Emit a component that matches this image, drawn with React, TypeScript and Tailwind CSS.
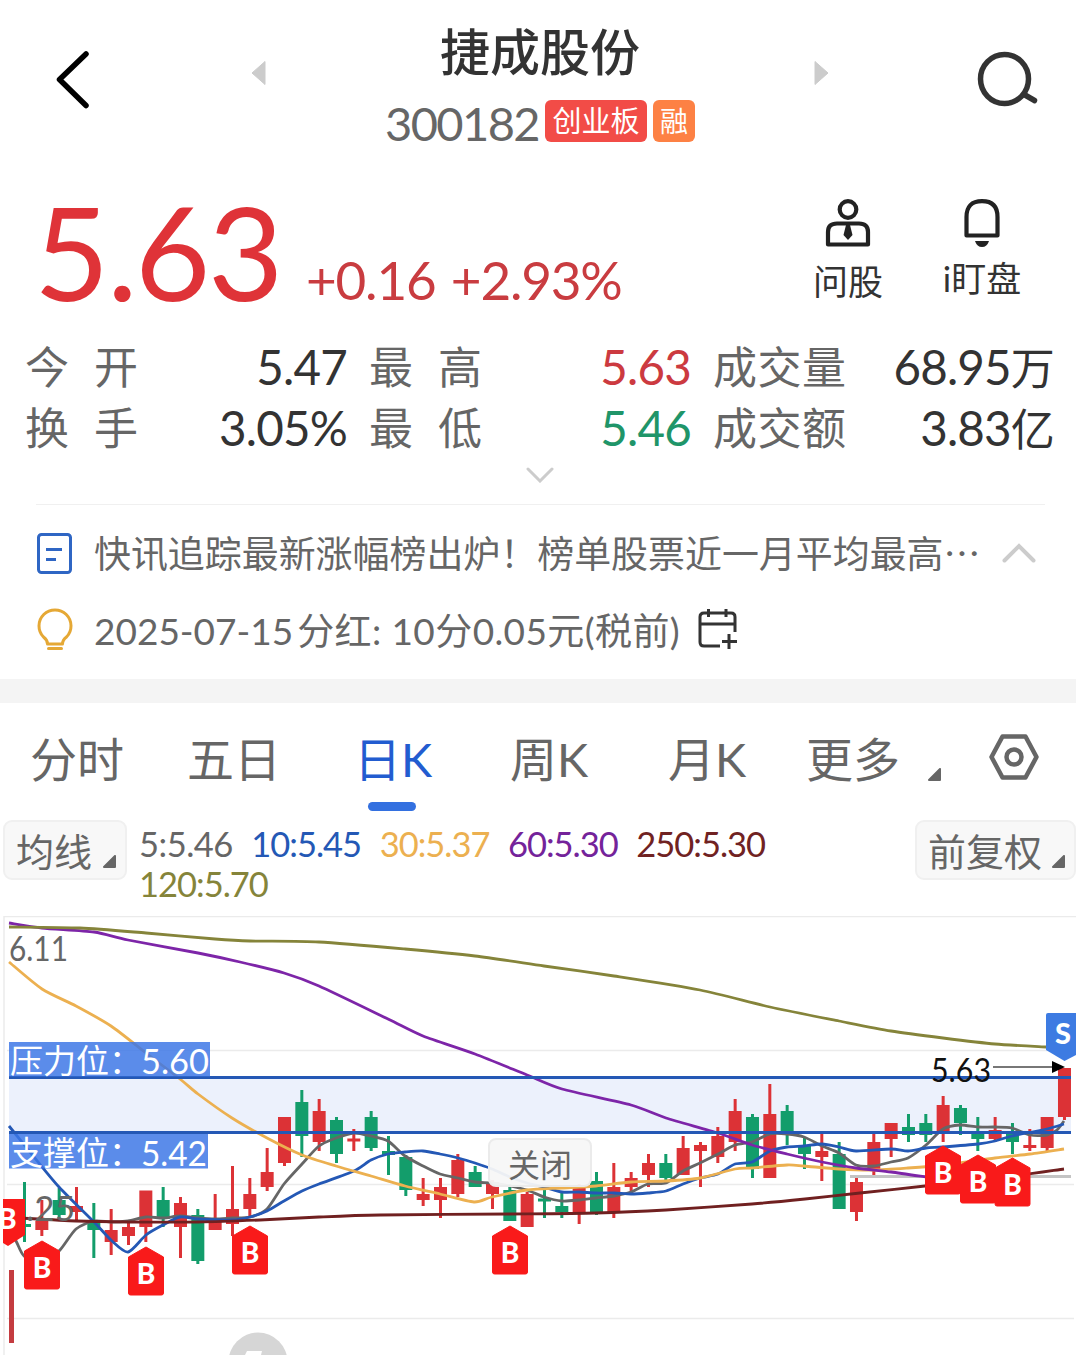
import { clsx } from 'clsx';

type Point = [number, number];
// direction, high, low, body top, body bottom
type Candle = ['u' | 'd', number, number, number, number];

const candles: Candle[] = [
  ['d', 1182, 1242, 1224, 1227], ['u', 1200, 1236, 1221, 1230], ['d', 1188, 1221, 1200, 1215],
  ['u', 1187, 1220, 1206, 1212], ['d', 1203, 1258, 1220, 1230], ['u', 1209, 1255, 1230, 1242],
  ['u', 1222, 1245, 1227, 1236], ['u', 1191, 1242, 1190.5, 1227], ['d', 1187, 1227, 1200, 1219],
  ['u', 1197, 1258, 1203, 1227], ['d', 1209, 1264, 1215, 1261], ['u', 1194, 1230, 1221, 1230],
  ['u', 1166, 1236, 1209, 1224], ['u', 1178, 1218, 1194, 1209], ['u', 1148, 1191, 1172, 1187],
  ['u', 1117, 1166, 1117, 1163], ['d', 1090, 1157, 1102, 1136], ['u', 1099, 1151, 1111, 1142],
  ['d', 1117, 1163, 1120, 1154], ['u', 1129, 1151, 1138.5, 1141.5], ['d', 1111, 1151, 1117, 1148],
  ['d', 1136, 1175, 1151, 1155], ['d', 1155, 1196, 1157, 1190], ['u', 1178, 1206, 1194, 1200],
  ['u', 1178, 1218, 1187, 1200], ['u', 1154, 1197, 1160, 1194], ['d', 1166, 1187, 1172, 1187],
  ['u', 1180, 1209, 1182, 1194], ['d', 1184, 1221, 1190, 1221], ['u', 1192, 1227, 1194, 1227],
  ['d', 1190, 1218, 1198.5, 1201.5], ['d', 1192, 1218, 1206, 1212], ['u', 1184, 1224, 1185, 1213],
  ['d', 1172, 1215, 1181, 1212], ['u', 1163, 1218, 1187, 1212], ['u', 1172, 1191, 1178, 1187],
  ['u', 1154, 1187, 1163, 1175], ['d', 1154, 1180, 1163, 1178], ['u', 1136, 1175, 1148, 1175],
  ['u', 1142, 1187, 1145, 1151], ['u', 1127, 1163, 1136, 1157], ['u', 1099, 1151, 1111, 1142],
  ['d', 1114, 1178, 1117, 1169], ['u', 1084, 1178, 1114, 1178], ['d', 1105, 1145, 1111, 1134],
  ['d', 1137, 1169, 1145, 1154], ['u', 1133, 1181, 1151, 1157], ['d', 1142, 1209, 1154, 1209],
  ['u', 1178, 1221, 1182, 1212], ['u', 1133, 1175, 1142, 1169], ['u', 1123, 1157, 1123, 1139],
  ['d', 1114, 1142, 1127, 1135], ['d', 1114, 1142, 1123, 1135], ['u', 1096, 1142, 1105, 1133],
  ['d', 1105, 1135, 1108, 1123], ['d', 1117, 1151, 1133, 1139], ['u', 1117, 1142, 1130, 1139],
  ['d', 1123, 1154, 1133, 1142], ['u', 1129, 1151, 1145, 1148], ['u', 1117, 1152, 1117, 1148],
  ['u', 1068, 1120, 1068, 1117],
];

const ma5: Point[] = [[9, 1226], [17, 1243], [24, 1256], [42, 1266], [60, 1250], [76, 1229], [94, 1221], [111, 1222], [128, 1221], [146, 1217], [163, 1218], [180, 1216], [198, 1218], [215, 1219], [232, 1218], [250, 1217], [267, 1209], [284, 1184], [302, 1164], [319, 1146], [336, 1138], [354, 1133], [371, 1136], [388, 1141], [405, 1156], [423, 1166], [440, 1174], [458, 1178], [475, 1182], [492, 1183], [510, 1186], [527, 1190], [544, 1197], [562, 1201], [579, 1200], [596, 1198], [614, 1196], [631, 1192], [648, 1184], [666, 1183], [683, 1171], [700, 1163], [718, 1154], [735, 1145], [752, 1142], [770, 1134], [787, 1134], [804, 1137], [822, 1146], [839, 1153], [856, 1165], [874, 1166], [891, 1162], [908, 1158], [926, 1145], [943, 1129], [960, 1125], [978, 1127], [995, 1127], [1012, 1128], [1030, 1135], [1047, 1135], [1057, 1130], [1064, 1121]];
const ma10: Point[] = [[9, 1126], [30, 1152], [59, 1187], [94, 1222], [111, 1240], [128, 1252], [146, 1235], [163, 1225], [180, 1217], [198, 1219], [232, 1220], [250, 1217], [267, 1211], [284, 1201], [302, 1191], [319, 1184], [354, 1171], [371, 1160], [388, 1154], [405, 1152], [423, 1151], [440, 1154], [458, 1158], [475, 1163], [492, 1169], [510, 1177], [527, 1183], [544, 1187], [562, 1192], [579, 1192], [596, 1193], [614, 1193], [631, 1194], [648, 1193], [666, 1191], [683, 1184], [700, 1178], [718, 1174], [735, 1164], [752, 1162], [770, 1151], [787, 1147], [804, 1146], [822, 1144], [839, 1147], [856, 1151], [891, 1149], [908, 1151], [926, 1148], [943, 1147], [978, 1144], [995, 1141], [1012, 1136], [1047, 1129], [1064, 1124]];
const ma30: Point[] = [[9, 962], [42, 989], [76, 1006], [111, 1026], [146, 1053], [180, 1079], [198, 1094], [232, 1118], [267, 1138], [302, 1155], [336, 1166], [371, 1176], [405, 1186], [440, 1194], [474, 1202], [492, 1197], [527, 1190], [562, 1188], [596, 1186], [631, 1182], [666, 1181], [700, 1178], [735, 1169], [752, 1168], [787, 1165], [804, 1166], [839, 1169], [874, 1170], [908, 1168], [943, 1165], [995, 1158], [1030, 1154], [1064, 1149]];
const ma60: Point[] = [[9, 923], [42, 928], [94, 932], [128, 940], [198, 953], [240, 962], [284, 973], [319, 986], [388, 1019], [423, 1036], [475, 1054], [527, 1075], [562, 1089], [631, 1105], [666, 1118], [718, 1133], [752, 1145], [787, 1154], [822, 1162], [856, 1168], [891, 1172], [926, 1177]];
const ma120: Point[] = [[9, 927], [80, 928], [146, 933], [215, 939], [250, 941], [319, 942], [405, 949], [475, 956], [544, 966], [614, 976], [700, 990], [770, 1007], [839, 1021], [891, 1031], [943, 1038], [995, 1044], [1047, 1047]];
const ma250: Point[] = [[20, 1218], [76, 1221], [128, 1222], [198, 1222], [260, 1220], [319, 1217], [380, 1215], [510, 1214], [596, 1213], [666, 1210], [752, 1204], [805, 1199], [860, 1193], [925, 1186], [1000, 1178], [1064, 1169]];

const buyMarks: Point[] = [[42, 1241], [146, 1247], [250, 1226], [510, 1226], [943, 1146], [978, 1155], [1012.5, 1158]];

const legend = [
  { text: '5:5.46', color: 'text-[#666666]' },
  { text: '10:5.45', color: 'text-[#2458b5]' },
  { text: '30:5.37', color: 'text-[#ecb050]' },
  { text: '60:5.30', color: 'text-[#74239a]' },
  { text: '250:5.30', color: 'text-[#702222]' },
];

const tabs = [
  { label: '分时', box: 'w-[157px]' },
  { label: '五日', box: 'w-[167px]' },
  { label: '日K', box: 'w-[156px]', active: true },
  { label: '周K', box: 'w-[158px]' },
  { label: '月K', box: 'w-[138px]' },
  { label: '更多', box: 'w-[122px]' },
];

const stats = [
  [
    { label: '今开', value: '5.47', color: 'text-[#333333]' },
    { label: '最高', value: '5.63', color: 'text-[#cc3a40]' },
    { label: '成交量', value: '68.95万', color: 'text-[#333333]' },
  ],
  [
    { label: '换手', value: '3.05%', color: 'text-[#333333]' },
    { label: '最低', value: '5.46', color: 'text-[#1f9569]' },
    { label: '成交额', value: '3.83亿', color: 'text-[#333333]' },
  ],
];

// Catmull-Rom spline with a low tension, so the averages stay close to their samples
function curve(points: Point[]) {
  let d = `M${points[0][0]} ${points[0][1]}`;
  for (let i = 0; i < points.length - 1; i++) {
    const p0 = points[i - 1] ?? points[i];
    const p1 = points[i];
    const p2 = points[i + 1];
    const p3 = points[i + 2] ?? p2;
    d += `C${p1[0] + (p2[0] - p0[0]) / 8} ${p1[1] + (p2[1] - p0[1]) / 8} ${p2[0] - (p3[0] - p1[0]) / 8} ${p2[1] - (p3[1] - p1[1]) / 8} ${p2[0]} ${p2[1]}`;
  }
  return d;
}

function Corner({ className }: { className?: string }) {
  return (
    <svg viewBox="0 0 13 13" className={clsx('w-[13px] h-[13px]', className)}>
      <path d="M12 1 V12 H1 Z" fill="#666" stroke="#666" strokeWidth="2" strokeLinejoin="round" />
    </svg>
  );
}

function BuyMark({ x, y }: { x: number; y: number }) {
  return (
    <g>
      <path d={`M${x} ${y} L${x + 17.5} ${y + 10} V${y + 46} Q${x + 17.5} ${y + 48} ${x + 15.5} ${y + 48} H${x - 15.5} Q${x - 17.5} ${y + 48} ${x - 17.5} ${y + 46} V${y + 10} Z`} fill="#f91a1a" stroke="#f91a1a" strokeLinejoin="round" />
      <text x={x} y={y + 37} textAnchor="middle" fontSize="28" fontWeight="900" fill="#fff">B</text>
    </g>
  );
}

function Header() {
  return (
    <header className="flex h-[165px] items-start pl-[54px]">
      <svg viewBox="0 0 40 62" className="mt-12 h-[62px] w-10" fill="none" stroke="#000" strokeWidth="5.500" strokeLinecap="round" strokeLinejoin="round">
        <path d="M32 6 L5.500 31.500 L32 57.500" />
      </svg>
      <svg viewBox="0 0 15 24" className="ml-[157px] mt-[61px] h-6 w-[15px]"><path d="M14 0.500 V23.500 L1 12 Z" fill="#ccc" stroke="#ccc" strokeLinejoin="round" /></svg>
      <div className="ml-[119px] flex w-[310px] flex-col items-center">
        <h1 className="mt-[22px] h-[60px] text-[50px] font-medium leading-[60px] text-[#333333]">捷成股份</h1>
        <div className="mt-[18px] flex h-[42px] items-center">
          <span className="mt-1 w-[160px] text-[47px] leading-[42px] tracking-[-1.600px] text-[#666666]">300182</span>
          <span className="mr-1.5 h-[42px] w-[102px] shrink-0 rounded-md bg-[#f24c47] text-center text-[29px] leading-[42px] text-white">创业板</span>
          <span className="h-[42px] w-[42px] shrink-0 rounded-md bg-[#fd8144] text-center text-[28px] leading-[42px] text-white">融</span>
        </div>
      </div>
      <svg viewBox="0 0 15 24" className="ml-[119px] mt-[61px] h-6 w-[15px]"><path d="M1 0.500 V23.500 L14 12 Z" fill="#ccc" stroke="#ccc" strokeLinejoin="round" /></svg>
      <svg viewBox="0 0 64 60" className="ml-[147px] mt-[50px] h-[60px] w-16" fill="none" stroke="#333" strokeWidth="5.500" strokeLinecap="round">
        <ellipse cx="28.500" cy="29" rx="24" ry="24.500" />
        <path d="M49 45 L58.500 50.500" />
      </svg>
    </header>
  );
}

function Quote() {
  return (
    <section className="flex h-[172px]">
      <div className="flex w-[780px] pl-[34px]">
        <span className="w-[272px] text-[130px] leading-[172px] tracking-[-2.500px] text-[#df3338]">5.63</span>
        <span className="mt-[83px] whitespace-pre text-[53px] leading-[64px] tracking-[-1.200px] text-[#c93c40] [word-spacing:3px]">+0.16 +2.93%</span>
      </div>
      <div className="flex w-[136px] flex-col items-center pt-8">
        <svg viewBox="0 0 48 50" className="h-[50px] w-12" fill="none" stroke="#222" strokeWidth="4.200">
          <circle cx="24" cy="12.500" r="8.300" />
          <path d="M4 47.500 V35 Q4 26.500 13 26.500 H35 Q44 26.500 44 35 V47.500 Z" strokeLinejoin="round" />
          <path d="M22 28 H26 L28.500 38 L24 43 L19.500 38 Z" fill="#222" stroke="none" />
        </svg>
        <span className="mt-[9px] text-[35px] leading-[50px] text-[#333333]">问股</span>
      </div>
      <div className="flex w-[132px] flex-col items-center pt-8">
        <svg viewBox="0 0 48 50" className="h-[50px] w-12" fill="none" stroke="#222" strokeWidth="4.200">
          <path d="M8.500 38.500 V20 Q8.500 4.200 24 4.200 Q39.500 4.200 39.500 20 V38.500 Z" strokeLinejoin="round" />
          <path d="M17 44 H31 Q29 50 24 50 Q19 50 17 44 Z" fill="#222" stroke="none" />
        </svg>
        <span className="mt-1.5 text-[35px] leading-[50px] text-[#333333]">i盯盘</span>
      </div>
    </section>
  );
}

function Stats() {
  return (
    <section className="h-[167px] pl-[25px] pr-[21px]">
      {stats.map((row) => (
        <div key={row[0].label} className="flex h-[61px] items-center">
          {row.map((cell, i) => (
            <div key={cell.label} className={clsx('flex text-[44px] leading-[61px]', i < 2 ? 'mr-[22px] w-[322px]' : 'w-[341px]')}>
              <span className={clsx('flex justify-between pt-px text-[#666666]', cell.label.length === 2 ? 'w-[113px]' : 'w-[133px]')}>
                {cell.label.split('').map((c) => <span key={c}>{c}</span>)}
              </span>
              <span className={clsx('ml-auto text-right tracking-[-0.800px]', cell.color)}>
                <span className="text-[47.500px]">{cell.value.replace(/[万亿]/, '')}</span>
                {cell.value.match(/[万亿]/)?.[0]}
              </span>
            </div>
          ))}
        </div>
      ))}
      <svg viewBox="0 0 28 16" className="mx-auto mt-2 h-4 w-7" fill="none" stroke="#ccc" strokeWidth="3" strokeLinecap="round"><path d="M2 2 L14 14 L26 2" /></svg>
    </section>
  );
}

function News() {
  return (
    <section className="ml-9 mr-[31px] h-[175px] border-t border-[#f0f0f0] text-[#666666]">
      <div className="mt-[19px] flex h-[58px] items-center">
        <svg viewBox="0 0 38 42" className="h-[42px] w-[38px]" fill="none" stroke="#2f66c4" strokeWidth="3">
          <rect x="2.500" y="2.500" width="32" height="38" rx="3" />
          <path d="M10 17.500 H26 M10 27.500 H20" />
        </svg>
        <span className="ml-5 w-[890px] whitespace-nowrap text-[36.950px] leading-[58px]">
          快讯追踪最新涨幅榜出炉！榜单股票近一月平均最高<span className="font-['Noto_Sans_CJK_SC']">⋯</span>
        </span>
        <svg viewBox="0 0 34 20" className="ml-[18px] h-5 w-[34px]" fill="none" stroke="#ccc" strokeWidth="4" strokeLinecap="round"><path d="M2.500 17.500 L17 3 L31.500 17.500" /></svg>
      </div>
      <div className="mt-5 flex h-[58px] items-center">
        <svg viewBox="0 0 38 44" className="-mt-0.5 h-11 w-[38px]" fill="none" stroke="#e5a835" strokeWidth="3" strokeLinecap="round" strokeLinejoin="round">
          <path d="M11.500 36 C11.500 32.500 9.500 30.500 7.500 29 A16 16 0 1 1 30.500 29 C28.500 30.500 26.500 32.500 26.500 36 Z" />
          <path d="M12.500 40.500 H25.500" />
        </svg>
        <span className="ml-5 w-[587px] whitespace-nowrap text-[37px] leading-[58px] tracking-[0.400px]">
          <span className="mr-1 tracking-normal">2025-07-15</span>分红: 10分0.05元(税前)
        </span>
        <svg viewBox="0 0 42 42" className="-mt-1.5 ml-[15px] h-[42px] w-[42px]" fill="none" stroke="#333" strokeWidth="3">
          <path d="M24 39 H8 Q4 39 4 35 V10 Q4 6 8 6 H35 Q39 6 39 10 V25 M4 17 H39 M12.500 2 V10 M30 2 V10 M33 27 V42 M26 34.500 H41" />
        </svg>
      </div>
    </section>
  );
}

function Tabs() {
  return (
    <nav className="flex h-[117px] pl-[30px] pt-6">
      {tabs.map((tab) => (
        <div key={tab.label} className={clsx('shrink-0', tab.box)}>
          <span className={clsx('block w-fit text-[47px] leading-[64px]', tab.active ? 'text-[#225cd0]' : 'text-[#666666]')}>{tab.label}</span>
          {tab.active && <span className="ml-3.5 mt-[11px] block h-[9px] w-12 rounded-full bg-[#3370e0]" />}
        </div>
      ))}
      <Corner className="mt-[41px]" />
      <svg viewBox="0 0 50 46" className="ml-12 mt-[7px] h-[46px] w-[50px]" fill="none" stroke="#666" strokeWidth="4.500" strokeLinejoin="round">
        <path d="M13.500 2.500 H36.500 L47.500 23 L36.500 43.500 H13.500 L2.500 23 Z" />
        <circle cx="25" cy="23" r="7.500" />
      </svg>
    </nav>
  );
}

function Legend() {
  return (
    <div className="flex h-[96px] items-start pl-[3px]">
      <button className="flex h-[60px] w-[124px] items-center rounded-[9px] border-2 border-[#f0f0f0] bg-[#f8f8f8] pl-[11px] text-[38px] leading-[58px] text-[#666666]">
        <span className="mt-0.5">均线</span><Corner className="ml-[11px] mt-[23px]" />
      </button>
      <div className="ml-3 flex w-[700px] flex-wrap gap-x-[18.500px] pt-1 text-[34.500px] leading-10 tracking-[-1px]">
        {legend.map((l) => <span key={l.text} className={clsx(l.color, l.text === '5:5.46' && 'tracking-[-0.500px]')}>{l.text}</span>)}
        <span className="w-full text-[#85843a]">120:5.70</span>
      </div>
      <button className="ml-auto flex h-[60px] w-[161px] items-center rounded-[9px] border-2 border-[#f0f0f0] bg-[#f8f8f8] pl-[11px] text-[38px] leading-[58px] text-[#666666]">
        <span className="mt-0.5 shrink-0">前复权</span><Corner className="ml-2.5 mt-[23px] shrink-0" />
      </button>
    </div>
  );
}

function Chart() {
  return (
    <section className="relative h-[439px]">
      <svg viewBox="0 916 1076 439" className="h-[439px] w-[1076px]">
        <path d="M4 916.500 H1076 M7 1050.500 H1074 M7 1184.500 H1074 M7 1318.500 H1074 M4 916 V1355" stroke="#ebebeb" strokeWidth="1.500" fill="none" />
        <path d="M850 1176.500 H1071" stroke="#c4c4c4" strokeWidth="3" />
        <rect x="9" y="1079" width="1062" height="53" fill="#ecf1fc" />

        {candles.map(([dir, high, low, top, bottom], i) => {
          const x = 24.5 + i * 17.333;
          return (
            <g key={i} fill={dir === 'u' ? '#dc3236' : '#139d6b'}>
              <rect x={x - 1.5} y={high} width="3" height={low - high} />
              <rect x={x - 6.5} y={top} width="13" height={bottom - top} />
            </g>
          );
        })}
        <rect x="9" y="1270" width="5" height="73" fill="#c43c40" />

        <g fill="none" strokeWidth="2.800" strokeLinejoin="round">
          <path d={curve(ma5)} stroke="#666" />
          <path d={curve(ma10)} stroke="#2458b5" />
          <path d={curve(ma30)} stroke="#ecb050" />
          <path d={curve(ma60)} stroke="#7d25a8" />
          <path d={curve(ma120)} stroke="#85843a" />
          <path d={curve(ma250)} stroke="#702020" />
        </g>

        <path d="M9 1077.500 H1071 M9 1132.500 H1071" stroke="#2458b5" strokeWidth="3" />
        <rect x="9" y="1042" width="201" height="34.500" fill="#3b76e6" fillOpacity="0.840" />
        <rect x="9" y="1134" width="199" height="34.500" fill="#3b76e6" fillOpacity="0.840" />
        <g fontSize="33" fill="#fff">
          <text x="10" y="1073">压力位：</text>
          <text x="141" y="1074" fontSize="35" textLength="68" lengthAdjust="spacingAndGlyphs">5.60</text>
          <text x="10" y="1165">支撑位：</text>
          <text x="141" y="1165.500" fontSize="35" textLength="66" lengthAdjust="spacingAndGlyphs">5.42</text>
        </g>
        <g fontSize="35" fill="#666">
          <text x="9" y="960.500" textLength="59" lengthAdjust="spacingAndGlyphs">6.11</text>
          <text x="26" y="1221" textLength="49" lengthAdjust="spacingAndGlyphs">.25</text>
        </g>

        <path d="M3 1199 H25 V1235 L8 1246 L3 1243 Z" fill="#f91a1a" />
        <text x="-2" y="1229" fontSize="28" fontWeight="900" fill="#fff">B</text>
        <rect x="0" y="1199" width="3" height="47" fill="#fff" />
        {buyMarks.map(([x, y]) => <BuyMark key={x} x={x} y={y} />)}

        <path d="M1046 1015 Q1046 1013 1048 1013 H1076 V1055 L1064.500 1061 L1046 1050 Z" fill="#3d7be2" />
        <text x="1063" y="1043.500" textAnchor="middle" fontSize="29" fontWeight="900" fill="#fff">S</text>
        <text x="931" y="1081.500" fontSize="32.500" fill="#111" textLength="60" lengthAdjust="spacingAndGlyphs">5.63</text>
        <path d="M993 1067 H1053" stroke="#777" strokeWidth="2" />
        <path d="M1052 1061 V1073 L1065 1067 Z" fill="#000" />

        <circle cx="258" cy="1362" r="29.500" fill="#d6d6d6" />
        <path d="M247 1351 H262 L261 1355 H245 Z" fill="#fff" />
      </svg>
      <button className="absolute left-[488px] top-[222px] h-[49px] w-[104px] rounded-lg border-2 border-[#ebebeb] bg-[#f7f7f7]/95 text-[32px] leading-[49px] text-[#666666]">关闭</button>
    </section>
  );
}

export default function App() {
  return (
    <main className="h-[1355px] w-[1076px] overflow-hidden bg-white font-[Lato,'Noto_Sans_CJK_SC',sans-serif]">
      <Header />
      <Quote />
      <Stats />
      <News />
      <div className="h-6 bg-[#f4f4f4]" />
      <Tabs />
      <Legend />
      <Chart />
    </main>
  );
}
